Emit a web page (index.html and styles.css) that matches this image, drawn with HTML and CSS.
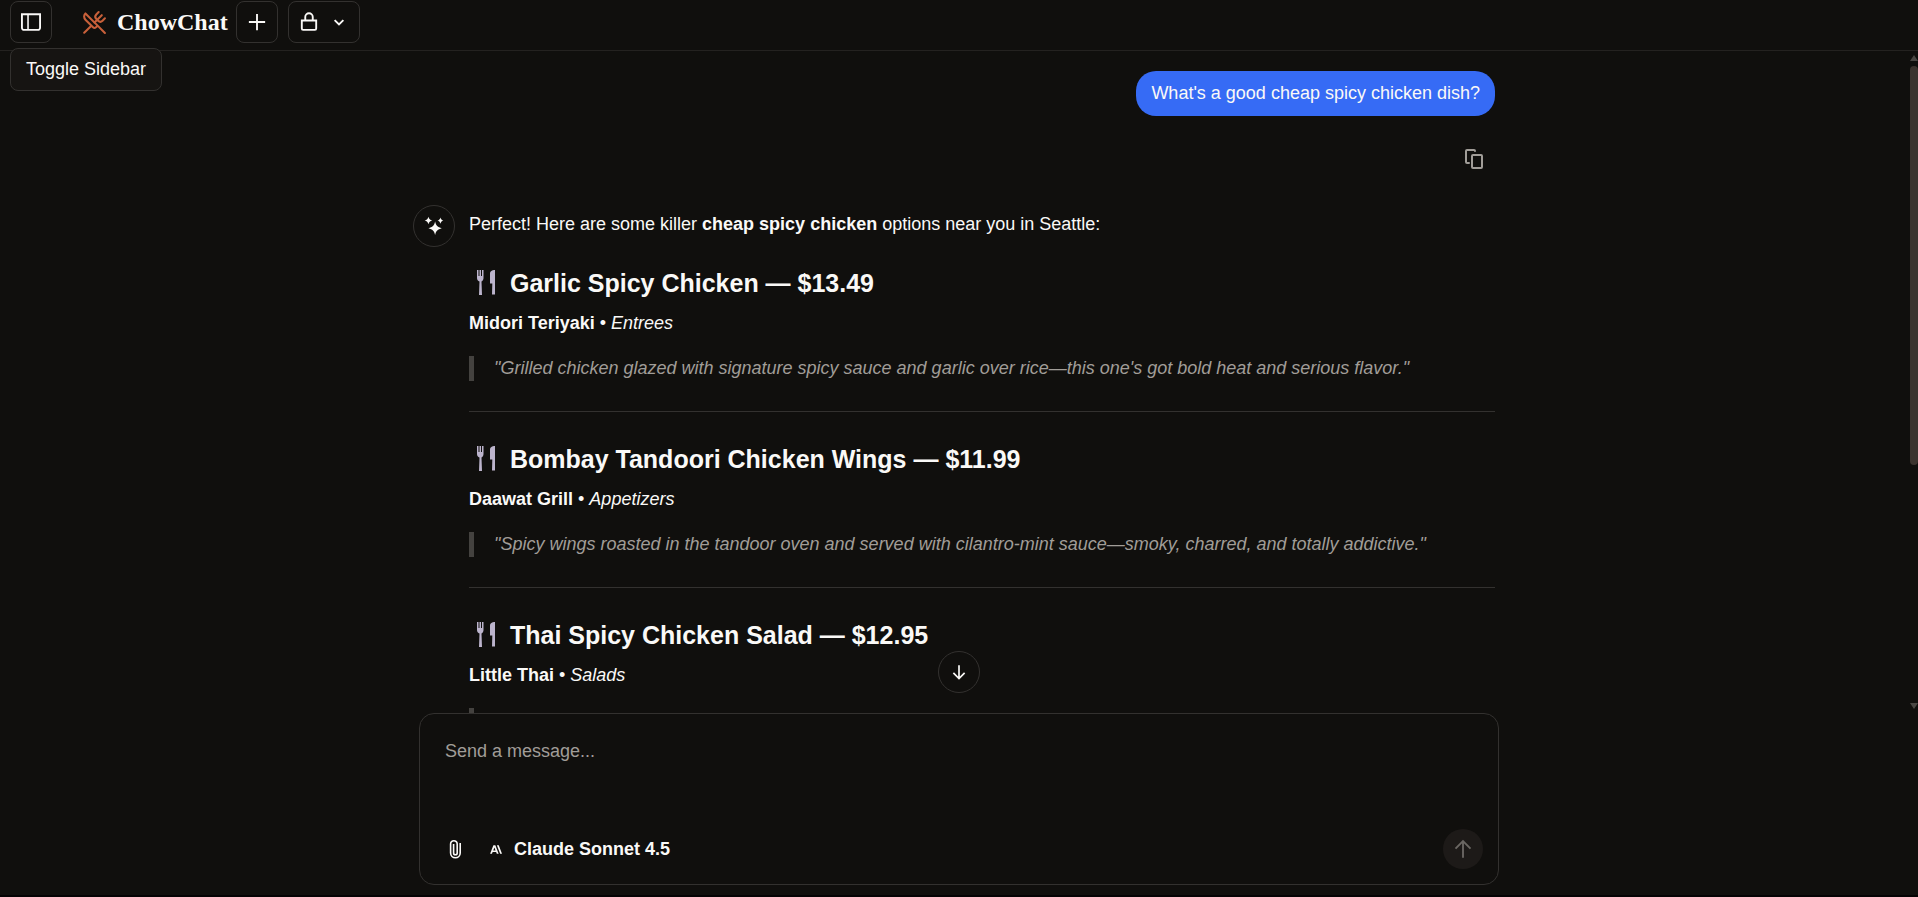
FILE: index.html
```
<!DOCTYPE html>
<html lang="en">
<head>
  <meta charset="UTF-8" />
  <meta name="viewport" content="width=device-width, initial-scale=1.0"/>
  <title>ChowChat</title>

  <link rel="stylesheet" href="styles.css">
</head>
<body>
  <header class="topbar">
    <div class="sidebar-toggle">
      <button class="btn" type="button" aria-label="Toggle Sidebar" aria-describedby="tip">
        <svg width="20" height="20" viewBox="0 0 16 16" fill="currentColor"><path fill-rule="evenodd" clip-rule="evenodd" d="M6.245 2.5H14.5V12.5C14.5 13.052 14.052 13.5 13.5 13.5H6.245V2.5ZM4.995 2.5H1.5V12.5C1.5 13.052 1.948 13.5 2.5 13.5H4.995V2.5ZM0 1H1.5H14.5H16V2.5V12.5C16 13.881 14.881 15 13.5 15H2.5C1.119 15 0 13.881 0 12.5V2.5V1Z"/></svg>
      </button>
      <div class="tooltip" id="tip" role="tooltip">Toggle Sidebar</div>
    </div>
    <a class="brand" href="#">
      <svg width="25" height="25" viewBox="0 0 24 24" fill="none" stroke="currentColor" stroke-width="2" stroke-linecap="round" stroke-linejoin="round"><path d="m16 2-2.300 2.300a3 3 0 0 0 0 4.200l1.800 1.800a3 3 0 0 0 4.200 0L22 8"/><path d="M15 15 3.300 3.300a4.200 4.200 0 0 0 0 6l7.300 7.300c.7.700 2 .7 2.800 0L15 15Zm0 0 7 7"/><path d="m2.100 21.800 6.400-6.300"/><path d="m19 5-7 7"/></svg>
      <span>ChowChat</span>
    </a>
    <button class="btn" type="button" aria-label="New Chat">
      <svg width="20" height="20" viewBox="0 0 16 16" fill="currentColor"><path d="M8.750 1.500H7.250V7.250H1.500V8.750H7.250V14.500H8.750V8.750H14.500V7.250H8.750V1.500Z"/></svg>
    </button>
    <button class="btn btn-wide" type="button" aria-label="Visibility: private">
      <svg width="20" height="20" viewBox="0 0 16 16" fill="none" stroke="currentColor" stroke-width="1.500"><path d="M5 6.500V4a3 3 0 0 1 6 0v2.500"/><path d="M2.250 6.750h11.500v6.500a1 1 0 0 1-1 1h-9.500a1 1 0 0 1-1-1z"/></svg>
      <svg width="20" height="20" viewBox="0 0 16 16" fill="none" stroke="currentColor" stroke-width="1.500"><path d="m4.500 6.500 3.500 3.500 3.500-3.500"/></svg>
    </button>
  </header>

  <main class="chat">
    <div class="messages">
      <div class="thread">
        <div class="user-message">
          <p class="bubble">What's a good cheap spicy chicken dish?</p>
          <button class="copy" type="button" aria-label="Copy">
            <svg width="20" height="20" viewBox="0 0 20 20" fill="none" stroke="currentColor" stroke-width="2" stroke-linecap="round" stroke-linejoin="round"><rect x="8" y="6" width="10" height="13" rx="1"/><path d="M5 14H3a1 1 0 0 1-1-1V2a1 1 0 0 1 1-1h7a1 1 0 0 1 1 1"/></svg>
          </button>
        </div>

        <div class="bot-message">
          <div class="avatar">
            <svg width="20" height="20" viewBox="0 0 18 18" fill="currentColor"><path d="M10 5c.9 3.700 2.300 5.100 6 6-3.700.9-5.100 2.300-6 6-.9-3.700-2.300-5.100-6-6 3.700-.9 5.100-2.300 6-6Z"/><path d="M4 .6c.6 2 1.400 2.800 3.400 3.400C5.400 4.600 4.600 5.400 4 7.400 3.400 5.400 2.600 4.600.6 4 2.600 3.400 3.400 2.600 4 .6Z"/><path d="M14.800 1.300c.5 1.600 1.200 2.300 2.600 2.800-1.400.5-2.100 1.200-2.600 2.800-.5-1.600-1.200-2.300-2.600-2.800 1.400-.5 2.100-1.200 2.600-2.800Z"/></svg>
          </div>
          <div class="answer">
            <p class="intro">Perfect! Here are some killer <strong>cheap spicy chicken</strong> options near you in Seattle:</p>

            <section class="dish">
              <h3><svg class="cutlery" viewBox="0 0 34 28" fill="currentColor"><path d="M8 1h1.500v6h1V1H12v6h1V1h1.500v8c0 2-1 3-2 3.500L13 26h-3l.5-13.500C9 12 8 11 8 9Z"/><path d="M26 1v24.500h-3l.3-11H21V5c0-3 2-4 5-4Z"/></svg> Garlic Spicy Chicken — $13.49</h3>
              <p><strong>Midori Teriyaki</strong> • <em>Entrees</em></p>
              <blockquote>"Grilled chicken glazed with signature spicy sauce and garlic over rice—this one's got bold heat and serious flavor."</blockquote>
            </section>
            <hr>
            <section class="dish">
              <h3><svg class="cutlery" viewBox="0 0 34 28" fill="currentColor"><path d="M8 1h1.500v6h1V1H12v6h1V1h1.500v8c0 2-1 3-2 3.500L13 26h-3l.5-13.500C9 12 8 11 8 9Z"/><path d="M26 1v24.500h-3l.3-11H21V5c0-3 2-4 5-4Z"/></svg> Bombay Tandoori Chicken Wings — $11.99</h3>
              <p><strong>Daawat Grill</strong> • <em>Appetizers</em></p>
              <blockquote>"Spicy wings roasted in the tandoor oven and served with cilantro-mint sauce—smoky, charred, and totally addictive."</blockquote>
            </section>
            <hr>
            <section class="dish">
              <h3><svg class="cutlery" viewBox="0 0 34 28" fill="currentColor"><path d="M8 1h1.500v6h1V1H12v6h1V1h1.500v8c0 2-1 3-2 3.500L13 26h-3l.5-13.500C9 12 8 11 8 9Z"/><path d="M26 1v24.500h-3l.3-11H21V5c0-3 2-4 5-4Z"/></svg> Thai Spicy Chicken Salad — $12.95</h3>
              <p><strong>Little Thai</strong> • <em>Salads</em></p>
              <blockquote></blockquote>
            </section>
          </div>
        </div>
      </div>
    </div>
    <div class="scrollbar" aria-hidden="true">
      <span class="arrow arrow-up"></span>
      <span class="thumb"></span>
      <span class="arrow arrow-down"></span>
    </div>
    <button class="scroll-down" type="button" aria-label="Scroll to bottom">
      <svg width="18" height="18" viewBox="0 0 16 16" fill="none" stroke="currentColor" stroke-width="1.500"><path d="M8 2v11.500M3 8.800l5 5 5-5"/></svg>
    </button>
  </main>

  <form class="composer">
    <textarea aria-label="Message" placeholder="Send a message..."></textarea>
    <div class="tools">
      <button class="attach" type="button" aria-label="Attach file">
        <svg width="18" height="20" viewBox="0 0 18 20" fill="none" stroke="currentColor" stroke-width="1.600"><path d="M14.200 4v10a4.800 4.800 0 0 1-9.600 0V5a3.300 3.300 0 0 1 6.600 0v9a1.800 1.800 0 0 1-3.600 0V5"/></svg>
      </button>
      <button class="model" type="button">
        <svg width="12" height="9" viewBox="0 0 24 17" fill="currentColor"><path fill-rule="evenodd" d="M13.800 0h3.700L24 17h-3.700Zm-7 0h3.900l6.600 17h-3.700l-1.300-3.500H5.300L3.900 17H.2Zm4.300 10.500L8.800 4.300l-2.300 6.200Z"/></svg>
        <span>Claude Sonnet 4.5</span>
      </button>
      <button class="send" type="submit" aria-label="Send" disabled>
        <svg width="20" height="20" viewBox="0 0 16 16" fill="none" stroke="currentColor" stroke-width="1.500"><path d="M8 15V2M2 7.700l6-6 6 6"/></svg>
      </button>
    </div>
  </form>
</body>
</html>
```
FILE: styles.css
```
:root {
  --bg: #100f0d;
  --panel: #161412;
  --border: #33312f;
  --line: #242220;
  --text: #faf9f7;
  --muted: #a19d98;
  --primary: #366bf5;
  --brand: #c8603a;
}

* {
  box-sizing: border-box;
}

body {
  margin: 0;
  height: 100vh;
  display: flex;
  flex-direction: column;
  background-color: var(--bg);
  color: var(--text);
  border-bottom: 2px solid #050304;
  font-family: "Liberation Sans", Arial, sans-serif;
  font-size: 18px;
  line-height: 25px;
}

button {
  display: flex;
  align-items: center;
  justify-content: center;
  padding: 0;
  border: none;
  background: none;
  color: inherit;
  font: inherit;
  cursor: pointer;
}

p,
h3,
blockquote {
  margin: 0;
}

.topbar {
  display: flex;
  gap: 10px;
  height: 51px;
  padding: 1px 10px 0;
  border-bottom: 1px solid var(--line);
}

.btn {
  width: 42px;
  height: 42px;
  border: 1px solid var(--border);
  border-radius: 8px;
}

.btn-wide {
  width: 72px;
  gap: 10px;
}

.sidebar-toggle {
  position: relative;
}

.tooltip {
  position: absolute;
  top: 47px;
  left: 0;
  z-index: 2;
  padding: 8px 15px;
  border: 1px solid var(--border);
  border-radius: 8px;
  background-color: var(--panel);
  white-space: nowrap;
}

.brand {
  display: flex;
  align-items: center;
  gap: 10px;
  width: 144px;
  height: 42px;
  margin-left: 20px;
  color: var(--text);
  font-family: "Liberation Serif", serif;
  font-size: 24px;
  font-weight: 700;
  text-decoration: none;
}

.brand svg {
  flex: none;
  color: var(--brand);
}

.chat {
  position: relative;
  display: flex;
  flex: 1;
  min-height: 0;
}

.messages {
  flex: 1;
  padding-right: 10px;
  overflow: hidden;
}

.thread {
  max-width: 1082px;
  margin: 0 auto;
  padding-top: 20px;
}

.user-message {
  display: flex;
  flex-direction: column;
  align-items: flex-end;
  gap: 22px;
}

.bubble {
  padding: 10px 15px;
  border-radius: 20px;
  background-color: var(--primary);
}

.copy {
  width: 42px;
  height: 42px;
  color: var(--muted);
}

.bot-message {
  display: flex;
  gap: 14px;
  margin-top: 25px;
}

.avatar {
  display: flex;
  align-items: center;
  justify-content: center;
  flex: none;
  width: 42px;
  height: 42px;
  border: 1px solid var(--border);
  border-radius: 50%;
}

.answer {
  flex: 1;
}

.intro {
  margin: 7px 0 28px;
}

.dish h3 {
  margin-bottom: 10px;
  font-size: 25px;
  line-height: 36px;
}

.cutlery {
  width: 34px;
  height: 28px;
  color: #bcb4cc;
  vertical-align: -5px;
}

.dish blockquote {
  min-height: 25px;
  margin-top: 20px;
  padding-left: 20px;
  border-left: 5px solid #44423f;
  color: var(--muted);
  font-style: italic;
}

hr {
  height: 1px;
  margin: 30px 0 29px;
  border: none;
  background-color: var(--border);
}

.scrollbar {
  position: absolute;
  top: 0;
  right: 0;
  bottom: 0;
  display: flex;
  flex-direction: column;
  align-items: center;
  gap: 5px;
  width: 8px;
  padding: 4px 0;
}

.arrow {
  border: 4px solid transparent;
}

.arrow-up {
  border-top: none;
  border-bottom: 6px solid #494643;
}

.arrow-down {
  margin-top: auto;
  border-bottom: none;
  border-top: 6px solid #494643;
}

.thumb {
  width: 8px;
  height: 61%;
  border-radius: 4px;
  background-color: #3b332e;
}

.scroll-down {
  position: absolute;
  bottom: 20px;
  left: 50%;
  width: 42px;
  height: 42px;
  border: 1px solid var(--border);
  border-radius: 50%;
  background-color: var(--bg);
  transform: translateX(-50%);
}

.composer {
  width: 100%;
  max-width: 1080px;
  margin: 0 auto 10px;
  padding: 15px;
  border: 1px solid var(--border);
  border-radius: 15px;
}

.composer textarea {
  display: block;
  width: 100%;
  height: 100px;
  padding: 10px;
  border: none;
  outline: none;
  resize: none;
  background: none;
  color: inherit;
  font: inherit;
}

.composer textarea::placeholder {
  color: var(--muted);
}

.tools {
  display: flex;
  align-items: center;
}

.attach {
  width: 40px;
  height: 40px;
}

.model {
  gap: 12px;
  margin-left: 15px;
  font-weight: 700;
}

.send {
  width: 40px;
  height: 40px;
  margin-left: auto;
  border-radius: 50%;
  background-color: #1d1a18;
  color: #6b6763;
}
```
